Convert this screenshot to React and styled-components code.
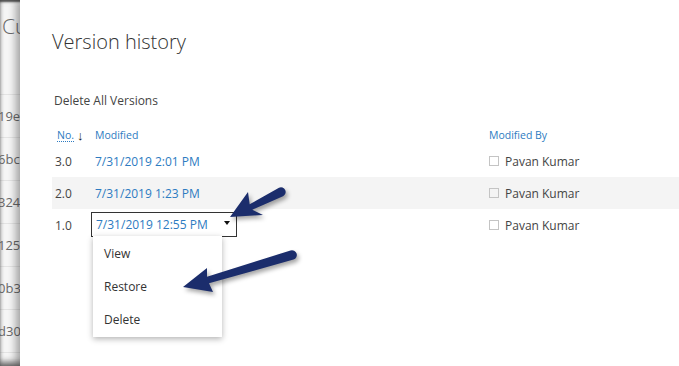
import React from "react";
import styled, { createGlobalStyle } from "styled-components";

const GlobalStyle = createGlobalStyle`
  html, body {
    margin: 0;
    padding: 0;
    background: #fff;
  }
  body {
    font-family: "Open Sans", "Noto Sans", sans-serif;
  }
`;

const pageIds = ["19e", "6bc", "324", "125", "0b3", "d30"];

const versions = [
  { no: "3.0", date: "7/31/2019 2:01 PM", by: "Pavan Kumar" },
  { no: "2.0", date: "7/31/2019 1:23 PM", by: "Pavan Kumar", shaded: true },
  { no: "1.0", date: "7/31/2019 12:55 PM", by: "Pavan Kumar", open: true },
];

const menuItems = ["View", "Restore", "Delete"];

const App = () => {
  return (
    <>
      <GlobalStyle />
      <Frame>
        <BackPage>
          <PageTitle>Cu</PageTitle>
          {pageIds.map((id) => (
            <PageRow key={id}>{id}</PageRow>
          ))}
        </BackPage>
        <Panel>
          <Title>Version history</Title>
          <DeleteAll>Delete All Versions</DeleteAll>
          <Table>
            <HeadRow>
              <HeadCell $first>
                <NoLabel>No.</NoLabel>
                <SortArrow>↓</SortArrow>
              </HeadCell>
              <HeadCell>Modified</HeadCell>
              <HeadCell>Modified By</HeadCell>
            </HeadRow>
            {versions.map((v) => (
              <Row key={v.no} $shaded={v.shaded}>
                <NoCell>{v.no}</NoCell>
                <DateCell>
                  {v.open ? (
                    <DateBox>
                      <DateLink>{v.date}</DateLink>
                      <Caret />
                      <Menu>
                        {menuItems.map((m) => (
                          <MenuItem key={m}>{m}</MenuItem>
                        ))}
                      </Menu>
                    </DateBox>
                  ) : (
                    <DateLink>{v.date}</DateLink>
                  )}
                </DateCell>
                <ByCell>
                  <Check />
                  {v.by}
                </ByCell>
              </Row>
            ))}
          </Table>
        </Panel>
        <Arrows viewBox="0 0 679 366" width="679" height="366">
          <path d="M230 217 L263 215 L252.3 209.7 L283 196.2 A4.6 4.6 0 0 0 279 187.8 L249.7 204.3 L248 192 Z" />
          <path d="M183 287 L213 292 L209 283.3 L293.5 259.6 A4.6 4.6 0 0 0 290.5 250.4 L207 276.7 L207 268 Z" />
        </Arrows>
      </Frame>
    </>
  );
};

const Frame = styled.div`
  position: relative;
  width: 679px;
  height: 366px;
  overflow: hidden;
  display: flex;
  background: #fff;

  &::after {
    content: "";
    position: absolute;
    inset: 0;
    pointer-events: none;
    box-shadow: inset 0 3px 2px -1px rgba(60, 60, 60, 0.85),
      inset -9px 0 8px -3px rgba(70, 70, 70, 0.75),
      inset 0 -6px 6px -2px rgba(70, 70, 70, 0.75),
      inset 2px 0 3px -1px rgba(120, 120, 120, 0.4);
  }
`;

const BackPage = styled.div`
  width: 20px;
  flex-shrink: 0;
  overflow: hidden;
  background: #f6f6f6;
  color: #6a6a6a;
  display: flex;
  flex-direction: column;
  white-space: nowrap;
`;

const PageTitle = styled.div`
  font-size: 21px;
  font-weight: 300;
  padding: 12px 0 0 2px;
  height: 95px;
  box-sizing: border-box;
  border-bottom: 1px solid #e4e4e4;
`;

const PageRow = styled.div`
  height: 43px;
  box-sizing: border-box;
  border-bottom: 1px solid #e4e4e4;
  font-size: 13px;
  display: flex;
  align-items: center;
  margin-left: -2px;
`;

const Panel = styled.div`
  flex: 1;
  position: relative;
  z-index: 1;
  background: #fff;
  box-shadow: -4px 0 8px rgba(0, 0, 0, 0.35);
  display: flex;
  flex-direction: column;
  padding: 28px 0 0 32px;
`;

const Title = styled.h1`
  margin: 0;
  font-size: 20px;
  font-weight: 300;
  line-height: 28px;
  color: #333;
`;

const DeleteAll = styled.div`
  margin-top: 36px;
  font-size: 12px;
  line-height: 17px;
  color: #444;
  padding-left: 2px;
`;

const Table = styled.div`
  margin-top: 16px;
  display: flex;
  flex-direction: column;
`;

const HeadRow = styled.div`
  display: grid;
  grid-template-columns: 43px 394px 1fr;
  height: 20px;
  align-items: center;
  font-size: 10.5px;
  color: #2d7bc1;
`;

const HeadCell = styled.div`
  padding-left: ${(p) => (p.$first ? "5px" : "0")};
  display: flex;
  align-items: center;
`;

const NoLabel = styled.span`
  border-bottom: 1px dotted #2d7bc1;
  line-height: 12px;
`;

const SortArrow = styled.span`
  color: #111;
  margin-left: 3px;
  font-size: 13px;
  line-height: 12px;
`;

const Row = styled.div`
  display: grid;
  grid-template-columns: 43px 394px 1fr;
  height: 32px;
  align-items: center;
  background: ${(p) => (p.$shaded ? "#f4f4f4" : "transparent")};
`;

const NoCell = styled.div`
  padding-left: 3px;
  font-size: 12px;
  color: #444;
`;

const DateCell = styled.div`
  display: flex;
  align-items: center;
`;

const DateLink = styled.span`
  font-size: 12px;
  color: #2d7bc1;
`;

const DateBox = styled.div`
  position: relative;
  margin-left: -4px;
  width: 146px;
  height: 25px;
  box-sizing: border-box;
  border: 1px solid #333;
  padding: 0 0 0 4px;
  display: flex;
  align-items: center;
  margin-top: -1px;
`;

const Caret = styled.span`
  margin-left: auto;
  margin-right: 6px;
  width: 0;
  height: 0;
  border-left: 3px solid transparent;
  border-right: 3px solid transparent;
  border-top: 4px solid #111;
  margin-top: -3px;
`;

const Menu = styled.div`
  position: absolute;
  top: 23px;
  left: 1px;
  width: 129px;
  padding: 1px 0;
  background: #fff;
  box-shadow: 0 2px 6px rgba(0, 0, 0, 0.3);
  display: flex;
  flex-direction: column;
  z-index: 2;
`;

const MenuItem = styled.div`
  height: 33px;
  display: flex;
  align-items: center;
  padding-left: 11px;
  font-size: 12px;
  color: #333;
`;

const ByCell = styled.div`
  display: flex;
  align-items: center;
  font-size: 12px;
  color: #444;
`;

const Check = styled.span`
  width: 10px;
  height: 10px;
  box-sizing: border-box;
  border: 1px solid #c4c4c4;
  margin-right: 6px;
`;

const Arrows = styled.svg`
  position: absolute;
  top: 0;
  left: 0;
  z-index: 3;
  pointer-events: none;
  fill: #1b2d6c;
  filter: drop-shadow(2px 3px 2px rgba(0, 0, 0, 0.35));
`;

export default App;
